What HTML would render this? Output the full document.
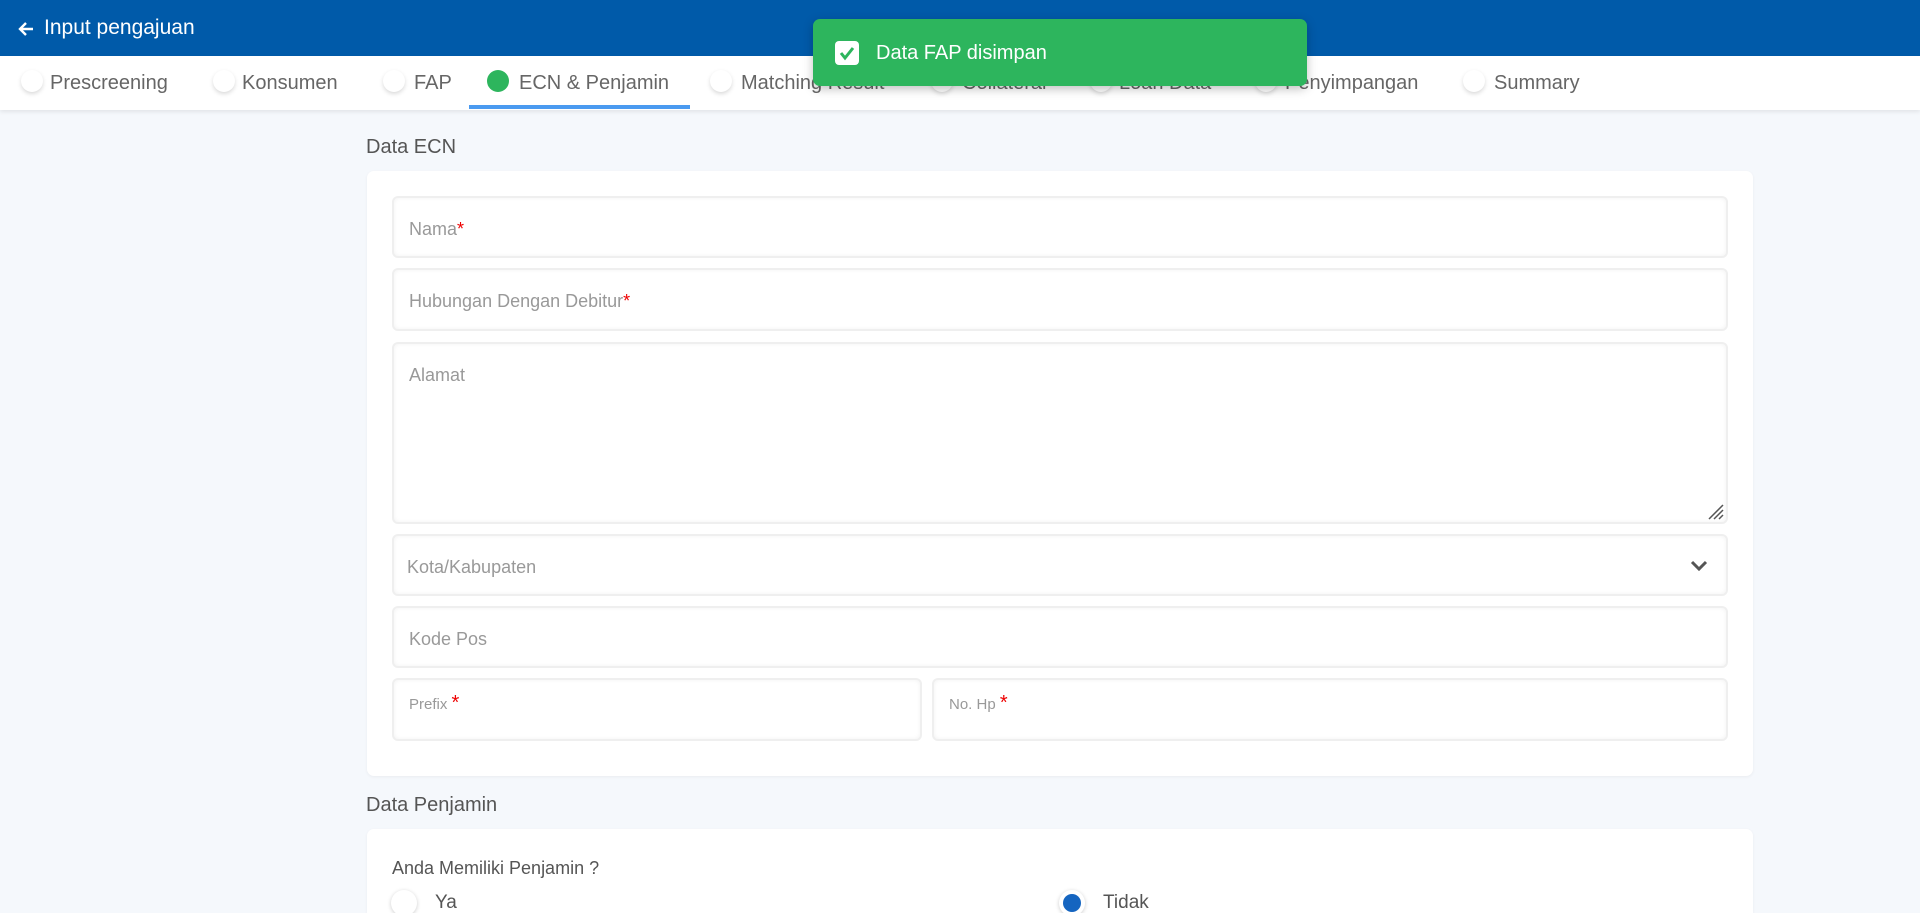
<!DOCTYPE html>
<html><head><meta charset="utf-8"><style>
*{box-sizing:border-box;margin:0;padding:0}
html,body{width:1920px;height:913px;overflow:hidden}
body{background:#f5f8fc;font-family:"Liberation Sans",sans-serif;position:relative}
.hdr{position:absolute;left:0;top:0;width:1920px;height:56px;background:#005aa9;color:#fff}
.hdr .t{position:absolute;left:44px;top:16px;font-size:21px}
.hdr svg{position:absolute;left:17px;top:20px}
.tabs{position:absolute;left:0;top:56px;width:1920px;height:54px;background:#fff;box-shadow:0 2px 4px rgba(0,0,0,.08)}
.tab{position:absolute;top:16px;font-size:20px;color:#666;white-space:nowrap}
.c{position:absolute;top:70px;width:22px;height:22px;border-radius:50%;background:#fff;box-shadow:0 2px 4px rgba(0,0,0,.15)}
.ul{position:absolute;left:469px;top:105px;width:221px;height:4px;background:#4a9af0}
.toast{position:absolute;left:813px;top:19px;width:494px;height:67px;background:#2db55d;border-radius:7px;box-shadow:0 3px 10px rgba(0,0,0,.25);color:#fff;font-size:20px}
.toast .b{position:absolute;left:22px;top:22px;width:24px;height:24px;background:#fff;border-radius:4px}
.toast span{position:absolute;left:63px;top:23px}
.h{position:absolute;left:366px;font-size:20px;color:#555}
.card{position:absolute;left:367px;width:1386px;background:#fff;border-radius:7px;box-shadow:0 1px 3px rgba(0,0,0,.05)}
.f{position:absolute;background:#fff;border:2px solid #efefef;border-radius:6px;box-shadow:inset 0 0 4px rgba(0,0,0,.06);font-size:18px;color:#999}
.f .l{position:absolute;left:15px;top:21px}
.s{color:#e00}
.f.sm .l{font-size:15px;top:12px}
.radio{position:absolute;width:26px;height:26px;border-radius:50%;background:#fff;box-shadow:0 1px 4px rgba(0,0,0,.2)}
</style></head><body>
<div class="hdr"><svg width="18" height="18" viewBox="0 0 18 18"><path d="M16 9H3M9 3L3 9l6 6" stroke="#fff" stroke-width="2.4" fill="none"/></svg><div class="t">Input pengajuan</div></div>
<div class="tabs">
<div class="tab" style="left:50px">Prescreening</div>
<div class="tab" style="left:242px">Konsumen</div>
<div class="tab" style="left:414px">FAP</div>
<div class="tab" style="left:519px">ECN &amp; Penjamin</div>
<div class="tab" style="left:741px">Matching Result</div>
<div class="tab" style="left:962px">Collateral</div>
<div class="tab" style="left:1119px">Loan Data</div>
<div class="tab" style="left:1285px">Penyimpangan</div>
<div class="tab" style="left:1494px">Summary</div>
</div>
<div class="c" style="left:21px"></div><div class="c" style="left:213px"></div><div class="c" style="left:383px"></div>
<div class="c" style="left:487px;background:#2db55d;box-shadow:none"></div>
<div class="c" style="left:710px"></div><div class="c" style="left:931px"></div><div class="c" style="left:1090px"></div><div class="c" style="left:1255px"></div><div class="c" style="left:1463px"></div>
<div class="ul"></div>
<div class="toast"><div class="b"><svg width="24" height="24" viewBox="0 0 24 24"><path d="M6 12l4 5 8-10" stroke="#2db55d" stroke-width="3" fill="none"/></svg></div><span>Data FAP disimpan</span></div>
<div class="h" style="top:136px">Data ECN</div>
<div class="card" style="top:171px;height:605px"></div>
<div class="f" style="left:392px;top:196px;width:1336px;height:62px"><div class="l">Nama<span class="s">*</span></div></div>
<div class="f" style="left:392px;top:268px;width:1336px;height:63px"><div class="l">Hubungan Dengan Debitur<span class="s">*</span></div></div>
<div class="f" style="left:392px;top:342px;width:1336px;height:182px"><div class="l">Alamat</div>
<svg style="position:absolute;right:2px;bottom:2px" width="18" height="18" viewBox="0 0 18 18"><path d="M17 3L3 17M17 8L8 17M17 13L13 17" stroke="#555" stroke-width="1.5"/></svg></div>
<div class="f" style="left:392px;top:534px;width:1336px;height:62px"><div class="l" style="left:13px">Kota/Kabupaten</div>
<svg style="position:absolute;right:18px;top:24px" width="18" height="12" viewBox="0 0 18 12"><path d="M2 2l7 7 7-7" stroke="#555" stroke-width="3" fill="none"/></svg></div>
<div class="f" style="left:392px;top:606px;width:1336px;height:62px"><div class="l">Kode Pos</div></div>
<div class="f sm" style="left:392px;top:678px;width:530px;height:63px"><div class="l">Prefix <span class="s" style="font-size:20px">*</span></div></div>
<div class="f sm" style="left:932px;top:678px;width:796px;height:63px"><div class="l">No. Hp <span class="s" style="font-size:20px">*</span></div></div>
<div class="h" style="top:794px">Data Penjamin</div>
<div class="card" style="top:829px;height:84px;border-radius:7px 7px 0 0"></div>
<div style="position:absolute;left:392px;top:858px;font-size:18px;color:#555">Anda Memiliki Penjamin ?</div>
<div class="radio" style="left:391px;top:890px"></div>
<div style="position:absolute;left:435px;top:892px;font-size:19px;color:#555">Ya</div>
<div class="radio" style="left:1059px;top:890px"><div style="position:absolute;left:4px;top:4px;width:18px;height:18px;border-radius:50%;background:#1565c0"></div></div>
<div style="position:absolute;left:1103px;top:892px;font-size:19px;color:#555">Tidak</div>
</body></html>
